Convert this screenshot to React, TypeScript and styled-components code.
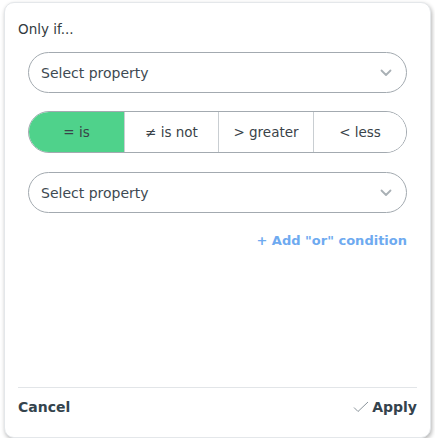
import React, { useState } from "react";
import styled, { createGlobalStyle } from "styled-components";

const Global = createGlobalStyle`
  html, body { margin: 0; padding: 0; background: #ffffff; }
  body { font-family: "DejaVu Sans", "Noto Sans", sans-serif; }
`;

const Card = styled.div`
  box-sizing: border-box;
  margin: 2px 0 0 4px;
  width: 427px;
  height: 436px;
  border: 1px solid #e4e7ea;
  border-radius: 10px;
  box-shadow: 1px 2px 4px rgba(0, 0, 0, 0.3);
  background: #fff;
  padding: 0 13px;
  display: flex;
  flex-direction: column;
`;

const Title = styled.div`
  font-size: 13.5px;
  color: #333b40;
  padding-top: 17px;
  line-height: 18px;
`;

const Body = styled.div`
  padding: 14px 10px 0 10px;
  display: flex;
  flex-direction: column;
`;

const SelectBox = styled.div<{ $mt?: number }>`
  box-sizing: border-box;
  height: 41px;
  border: 1px solid #a3aab0;
  border-radius: 21px;
  display: flex;
  align-items: center;
  justify-content: space-between;
  padding: 0 14px 0 12px;
  margin-top: ${(p) => p.$mt ?? 0}px;
  font-size: 14px;
  color: #3e4a52;
`;

const Segments = styled.div`
  margin-top: 18px;
  box-sizing: border-box;
  height: 42px;
  border: 1px solid #a3aab0;
  border-radius: 21px;
  overflow: hidden;
  display: grid;
  grid-template-columns: 95px 94px 95px 1fr;
`;

const Segment = styled.button<{ $active?: boolean }>`
  border: none;
  border-left: 1px solid #c9ced2;
  &:first-child { border-left: none; }
  background: ${(p) => (p.$active ? "#4fd28b" : "#fff")};
  color: #3a4349;
  font-family: inherit;
  font-size: 13.5px;
  padding: 0;
  cursor: pointer;
`;

const AddLink = styled.div`
  margin-top: 20px;
  align-self: flex-end;
  font-size: 13px;
  font-weight: bold;
  color: #6eaaf0;
`;

const Spacer = styled.div`
  flex: 1;
`;

const Divider = styled.div`
  height: 1px;
  background: #e2e5e8;
`;

const Footer = styled.div`
  height: 49px;
  display: flex;
  align-items: center;
  justify-content: space-between;
  padding-bottom: 11px;
  box-sizing: border-box;
`;

const FooterButton = styled.div`
  font-size: 14px;
  font-weight: bold;
  color: #34434d;
  display: flex;
  align-items: center;
  gap: 3px;
`;

const Chevron = () => (
  <svg width="12" height="8" viewBox="0 0 12 8">
    <path d="M1.5 1.5 L6 6 L10.5 1.5" fill="none" stroke="#a9b0b5" strokeWidth="1.8" strokeLinecap="round" strokeLinejoin="round" />
  </svg>
);

const Check = () => (
  <svg width="16" height="12" viewBox="0 0 16 12">
    <path d="M1 6.5 L5 10.5 L15 1" fill="none" stroke="#8a949b" strokeWidth="1" />
  </svg>
);

export default function App() {
  const [op, setOp] = useState(0);
  const ops = ["= is", "≠ is not", "> greater", "< less"];
  return (
    <>
      <Global />
      <Card>
        <Title>Only if...</Title>
        <Body>
          <SelectBox>
            <span>Select property</span>
            <Chevron />
          </SelectBox>
          <Segments>
            {ops.map((o, i) => (
              <Segment key={o} $active={op === i} onClick={() => setOp(i)}>
                {o}
              </Segment>
            ))}
          </Segments>
          <SelectBox $mt={19}>
            <span>Select property</span>
            <Chevron />
          </SelectBox>
          <AddLink>+ Add "or" condition</AddLink>
        </Body>
        <Spacer />
        <Divider />
        <Footer>
          <FooterButton>Cancel</FooterButton>
          <FooterButton>
            <Check />
            Apply
          </FooterButton>
        </Footer>
      </Card>
    </>
  );
}
